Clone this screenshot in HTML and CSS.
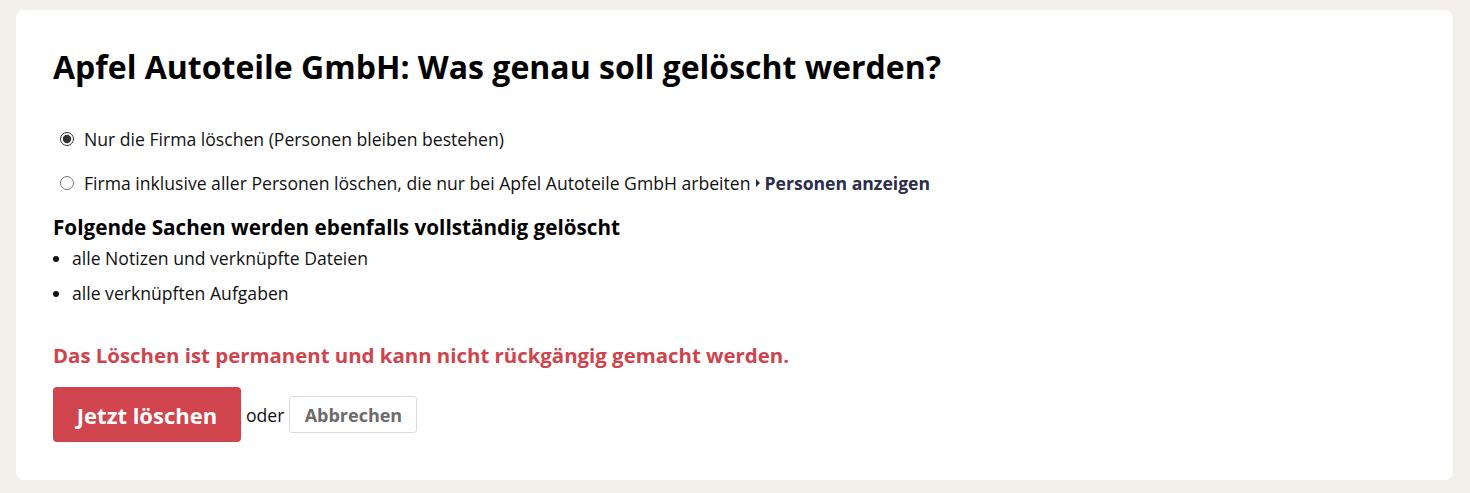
FILE: index.html
```html
<!DOCTYPE html>
<html lang="de">
<head>
<meta charset="utf-8">
<link rel="stylesheet" href="styles.css">
</head>
<body>
<div class="page">
  <div class="card">
    <h1 class="title">Apfel Autoteile GmbH: Was genau soll gelöscht werden?</h1>
    <div class="options">
      <label class="option"><input type="radio" name="mode" checked> <span>Nur die Firma löschen (Personen bleiben bestehen)</span></label>
      <label class="option"><input type="radio" name="mode"> <span>Firma inklusive aller Personen löschen, die nur bei Apfel Autoteile GmbH arbeiten</span> <a class="toggle"><svg class="caret" width="4" height="8" viewBox="0 0 4 8"><path d="M0 0 L4 4 L0 8 Z" fill="#2b2d4a"/></svg>Personen anzeigen</a></label>
    </div>
    <h2 class="subtitle">Folgende Sachen werden ebenfalls vollständig gelöscht</h2>
    <ul class="list">
      <li>alle Notizen und verknüpfte Dateien</li>
      <li>alle verknüpften Aufgaben</li>
    </ul>
    <p class="warning">Das Löschen ist permanent und kann nicht rückgängig gemacht werden.</p>
    <div class="actions">
      <button class="btn-danger">Jetzt löschen</button>
      <span class="or">oder</span>
      <button class="btn-cancel">Abbrechen</button>
    </div>
  </div>
</div>
</body>
</html>
```
FILE: styles.css
```css
html, body {
  margin: 0;
  padding: 0;
  background: #f3f0ea;
}
body {
  font-family: "Open Sans", "Lato", sans-serif;
  color: #111;
}
.page {
  padding: 10px 17px 13px 16px;
}
.card {
  background: #fff;
  border-radius: 8px;
  padding: 39px 37px 39px 37px;
  height: 470px;
  box-sizing: border-box;
}
.title {
  margin: 0;
  font-size: 32px;
  font-weight: 700;
  line-height: 36px;
  color: #000;
}
.options {
  margin-top: 43px;
  display: flex;
  flex-direction: column;
  gap: 22px;
}
.option {
  display: flex;
  align-items: center;
  font-size: 17.6px;
  line-height: 22px;
  color: #111;
}
.option input {
  margin: 0 10px 0 7px;
  width: 14px;
  height: 14px;
  accent-color: #333;
}
.toggle {
  display: inline-flex;
  align-items: center;
  font-weight: 700;
  color: #2b2d4a;
  margin-left: 6px;
}
.caret {
  margin-right: 4px;
}
.subtitle {
  margin: 21px 0 0 0;
  font-size: 20.7px;
  line-height: 24px;
  font-weight: 700;
  color: #000;
}
.list {
  margin: 8px 0 0 0;
  padding: 0 0 0 19px;
  font-size: 17.6px;
  line-height: 22px;
}
.list li {
  margin-bottom: 13px;
}
.warning {
  margin: 39px 0 0 0;
  font-size: 20.4px;
  line-height: 24px;
  font-weight: 700;
  color: #d0434d;
}
.actions {
  margin-top: 20px;
  display: flex;
  align-items: center;
}
.btn-danger {
  background: #d0444e;
  color: #fff;
  border: none;
  border-radius: 4px;
  font-family: inherit;
  font-weight: 700;
  font-size: 22px;
  width: 188px;
  height: 55px;
}
.or {
  font-size: 17.6px;
  margin: 0 5px;
}
.btn-cancel {
  background: #fff;
  color: #6b6b6b;
  border: 1px solid #dcdcdc;
  border-radius: 3px;
  font-family: inherit;
  font-weight: 700;
  font-size: 18px;
  width: 128px;
  height: 37px;
}
```
